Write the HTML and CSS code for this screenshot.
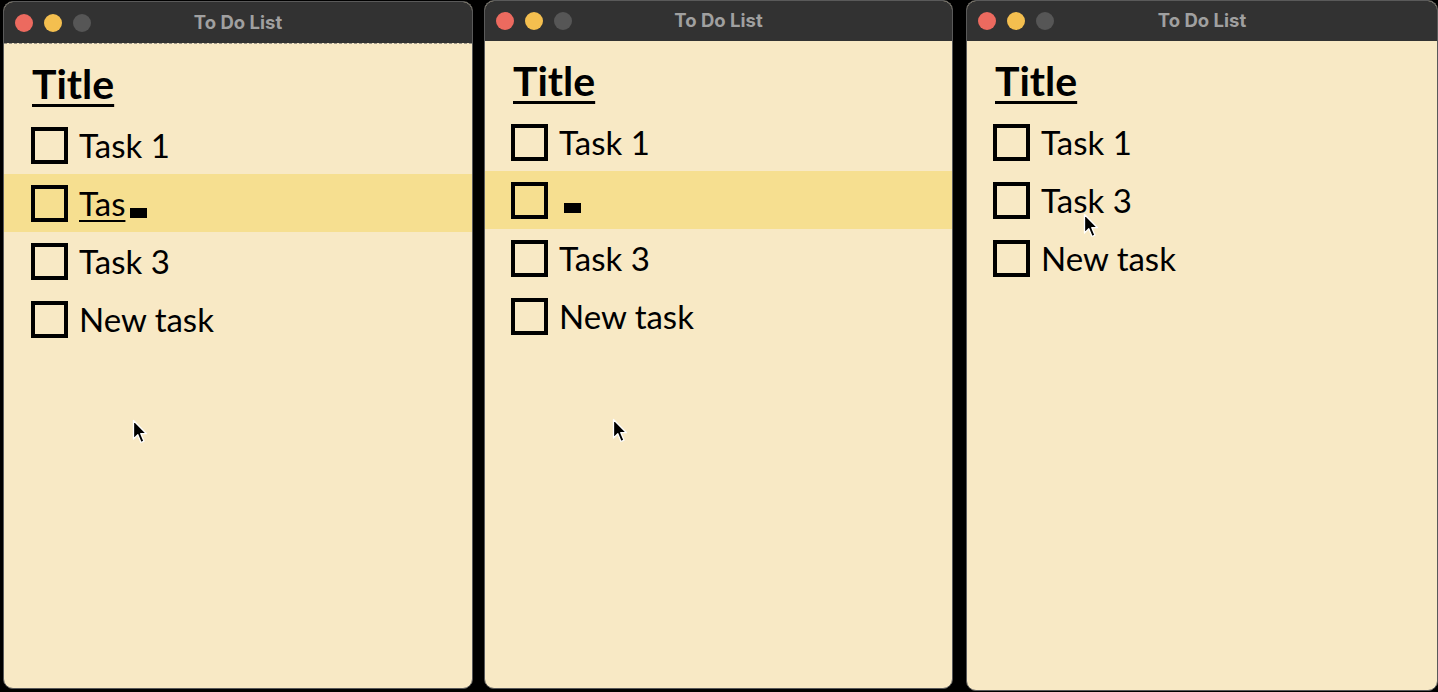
FILE: index.html
```html
<!DOCTYPE html>
<html>
<head>
<meta charset="utf-8">
<title>To Do List</title>
<link rel="stylesheet" href="styles.css">
</head>
<body>
<div class="desk">
  <div class="win w1">
    <div class="titlebar">
      <div class="lights"><span class="light red"></span><span class="light yellow"></span><span class="light gray"></span></div>
      <div class="wtitle">To Do List</div>
      <div></div>
    </div>
    <div class="content dashed">
      <h1 class="title">Title</h1>
      <ul class="tasks">
        <li class="task"><span class="box"></span><span class="label">Task 1</span></li>
        <li class="task active"><span class="box"></span><span class="label"><span class="typing">Tas</span><span class="caret"></span></span></li>
        <li class="task"><span class="box"></span><span class="label">Task 3</span></li>
        <li class="task"><span class="box"></span><span class="label">New task</span></li>
      </ul>
      <svg class="pointer p1" width="16" height="26" viewBox="0 0 16 26"><path d="M1.5 1.5 L1.5 20 L5.8 15.8 L9 23.5 L12 22.2 L8.8 14.7 L14.5 14.7 Z" fill="#000" stroke="#fff" stroke-width="1.3" stroke-linejoin="round"/></svg>
    </div>
  </div>

  <div class="win w2">
    <div class="titlebar">
      <div class="lights"><span class="light red"></span><span class="light yellow"></span><span class="light gray"></span></div>
      <div class="wtitle">To Do List</div>
      <div></div>
    </div>
    <div class="content">
      <h1 class="title">Title</h1>
      <ul class="tasks">
        <li class="task"><span class="box"></span><span class="label">Task 1</span></li>
        <li class="task active"><span class="box"></span><span class="label"><span class="caret first"></span></span></li>
        <li class="task"><span class="box"></span><span class="label">Task 3</span></li>
        <li class="task"><span class="box"></span><span class="label">New task</span></li>
      </ul>
      <svg class="pointer p2" width="16" height="26" viewBox="0 0 16 26"><path d="M1.5 1.5 L1.5 20 L5.8 15.8 L9 23.5 L12 22.2 L8.8 14.7 L14.5 14.7 Z" fill="#000" stroke="#fff" stroke-width="1.3" stroke-linejoin="round"/></svg>
    </div>
  </div>

  <div class="win w3">
    <div class="titlebar">
      <div class="lights"><span class="light red"></span><span class="light yellow"></span><span class="light gray"></span></div>
      <div class="wtitle">To Do List</div>
      <div></div>
    </div>
    <div class="content">
      <h1 class="title">Title</h1>
      <ul class="tasks">
        <li class="task"><span class="box"></span><span class="label">Task 1</span></li>
        <li class="task"><span class="box"></span><span class="label">Task 3</span></li>
        <li class="task"><span class="box"></span><span class="label">New task</span></li>
      </ul>
      <svg class="pointer p3" width="16" height="26" viewBox="0 0 16 26"><path d="M1.5 1.5 L1.5 20 L5.8 15.8 L9 23.5 L12 22.2 L8.8 14.7 L14.5 14.7 Z" fill="#000" stroke="#fff" stroke-width="1.3" stroke-linejoin="round"/></svg>
    </div>
  </div>
</div>
</body>
</html>
```

FILE: styles.css
```css
html, body {
  margin: 0;
  padding: 0;
  background: #000;
  width: 1438px;
  height: 692px;
  overflow: hidden;
}

.desk {
  display: flex;
  align-items: flex-start;
  padding-left: 3px;
}

.win {
  display: flex;
  flex-direction: column;
  background: #f8e9c5;
  border-radius: 10px;
  border: 1px solid #5a5a5a;
  overflow: hidden;
  box-sizing: border-box;
}

.w1 { width: 470px; height: 688px; margin-top: 1px; }
.w2 { width: 469px; height: 689px; margin-left: 11px; }
.w3 { width: 472px; height: 691px; margin-left: 13px; }

.titlebar {
  display: grid;
  grid-template-columns: 1fr auto 1fr;
  align-items: center;
  height: 41px;
  flex: none;
  background: #323232;
  box-sizing: border-box;
}

.w1 .titlebar { height: 41px; }
.w2 .titlebar, .w3 .titlebar { height: 40px; }

.lights {
  display: flex;
  gap: 11px;
  padding-left: 11px;
}

.light {
  width: 18px;
  height: 18px;
  border-radius: 50%;
  display: block;
}
.red { background: #ec6a5f; }
.yellow { background: #f4bf4f; }
.gray { background: #565656; }

.wtitle {
  font-family: Inter, "Liberation Sans", sans-serif;
  font-weight: 700;
  font-size: 18.5px;
  color: #a0a0a0;
  padding-bottom: 2px;
}

.content {
  position: relative;
  flex: 1;
  font-family: Lato, "Open Sans", sans-serif;
  color: #000;
}

.content.dashed {
  border-top: 1px dashed #9a9486;
}

.title {
  margin: 0;
  padding: 17px 0 9px 28px;
  font-size: 41px;
  line-height: 46px;
  font-weight: 700;
  text-decoration: underline;
  text-decoration-thickness: 3px;
  text-underline-offset: 5px;
}

.tasks {
  list-style: none;
  margin: 0;
  padding: 0;
}

.task {
  display: flex;
  align-items: center;
  height: 58px;
  padding-left: 27px;
  font-size: 33px;
  line-height: 58px;
}

.w2 .task, .w3 .task { padding-left: 26px; }

.task.active {
  background: #f6df90;
}

.box {
  width: 37px;
  height: 37px;
  border: 4px solid #000;
  box-sizing: border-box;
  flex: none;
}

.label {
  margin-left: 11px;
  display: flex;
  align-items: baseline;
  white-space: nowrap;
}

.typing {
  text-decoration: underline;
  text-decoration-thickness: 2px;
  text-underline-offset: 4px;
}

.caret {
  display: inline-block;
  width: 17px;
  height: 10px;
  background: #000;
  margin-left: 5px;
  position: relative;
  top: 2px;
}

.caret.first {
  align-self: center;
  top: 8px;
}

.pointer {
  position: absolute;
}
.p1 { left: 128px; top: 375px; }
.p2 { left: 127px; top: 377px; }
.p3 { left: 116px; top: 172px; }
```
